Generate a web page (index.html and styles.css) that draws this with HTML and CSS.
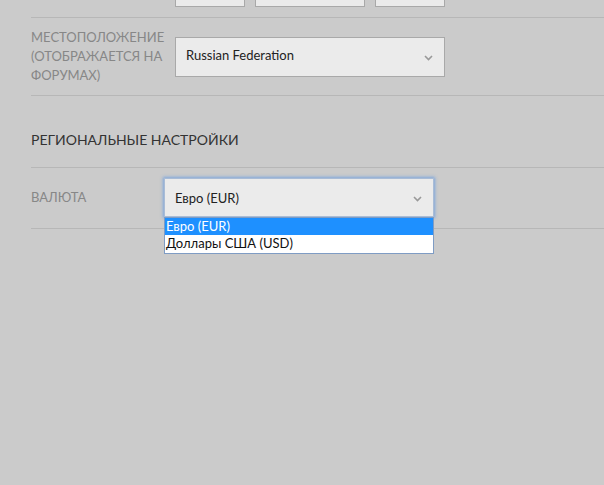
FILE: index.html
```html
<!DOCTYPE html>
<html lang="ru">
<head>
    <meta charset="UTF-8">
    <title>Настройки</title>
    <link rel="stylesheet" href="styles.css">
</head>
<body>

<div class="page">
    <div class="row top-row">
        <div class="stub stub-a"></div>
        <div class="stub stub-b"></div>
        <div class="stub stub-c"></div>
    </div>

    <div class="row field">
        <div class="label">Местоположение (отображается на форумах)</div>
        <div class="select">
            <span class="value">Russian Federation</span>
            <svg class="chev" width="9" height="6" viewBox="0 0 9 6"><path d="M1 1l3.5 3.5L8 1" fill="none" stroke="#999" stroke-width="1.6"/></svg>
        </div>
    </div>

    <div class="row section">
        <h2>Региональные настройки</h2>
    </div>

    <div class="row field field-currency">
        <div class="label">Валюта</div>
        <div class="select-wrap">
            <div class="select focused">
                <span>Евро (EUR)</span>
                <svg class="chev" width="9" height="6" viewBox="0 0 9 6"><path d="M1 1l3.5 3.5L8 1" fill="none" stroke="#999" stroke-width="1.6"/></svg>
            </div>
            <ul class="popup">
                <li class="active">Евро (EUR)</li>
                <li>Доллары США (USD)</li>
            </ul>
        </div>
    </div>
</div>

</body>
</html>
```

FILE: styles.css
```css
html, body{
    height: 100%;
}
body{
    margin: 0;
    background: #cbcbcb;
    font-family: Lato, "Noto Sans", sans-serif;
    color: #333;
}
.page{
    padding-left: 31px;
    min-height: 100%;
}
.row{
    border-bottom: 1px solid #b7b7b7;
}
.top-row{
    display: flex;
    height: 17px;
    padding-left: 144px;
    gap: 10px;
}
.stub{
    height: 6px;
    background: #ebebeb;
    border: 1px solid #a9a9a9;
    border-top: none;
}
.stub-a{ width: 68px; }
.stub-b{ width: 108px; }
.stub-c{ width: 68px; }

.field{
    display: flex;
    align-items: center;
    padding: 10px 0;
}
.label{
    width: 144px;
    flex: none;
    font-size: 13px;
    line-height: 19px;
    text-transform: uppercase;
    color: #878787;
}
.select{
    background: #ebebeb;
    border: 1px solid #a9a9a9;
    display: flex;
    align-items: center;
    justify-content: space-between;
    padding: 0 11px 0 10px;
    box-sizing: border-box;
    width: 270px;
    height: 40px;
    font-size: 13px;
    color: #222;
}
.value{
    margin-top: -4px;
}
.chev{
    margin-top: 3px;
}
.section{
    padding: 34px 0 17px;
}
.section h2{
    margin: 0;
    font-size: 14px;
    font-weight: normal;
    line-height: 20px;
    text-transform: uppercase;
    color: #333;
}
.field-currency{
    padding: 10px 0 11px;
}
.field-currency .label{
    width: 133px;
}
.select-wrap{
    position: relative;
}
.select.focused{
    height: 39px;
    border-color: #a9bcd6;
    box-shadow: 0 0 3px 1px rgba(90,150,230,0.7);
}
.popup{
    position: absolute;
    z-index: 5;
    left: 0;
    top: 39px;
    width: 270px;
    height: 37px;
    box-sizing: border-box;
    margin: 0;
    padding: 0;
    list-style: none;
    background: #fff;
    border: 1px solid #7f9cc4;
    font-size: 13px;
    color: #111;
}
.popup li{
    height: 17px;
    line-height: 17px;
    padding-left: 1px;
}
.popup li.active{
    background: #1e90ff;
    color: #fff;
}
```
